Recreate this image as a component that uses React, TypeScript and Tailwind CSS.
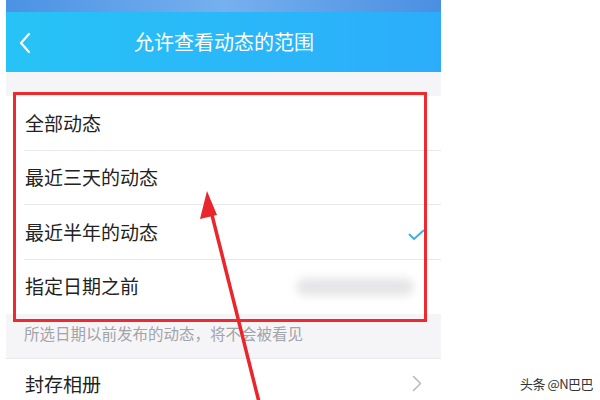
import React from "react";

const font = { fontFamily: '"Noto Sans CJK SC", "Noto Sans", sans-serif' };

function Row({ label, right, last }: { label: string; right?: React.ReactNode; last?: boolean }) {
  return (
    <div className="relative flex h-[54.5px] items-center bg-white pl-[19px] pr-[17px]">
      <span className="text-[19px] leading-none text-[#222] pb-[2px]">{label}</span>
      <div className="ml-auto flex items-center">{right}</div>
      {!last && <div className="absolute bottom-0 left-[18px] right-0 h-px bg-[#e9e9ec]" />}
    </div>
  );
}

export default function App() {
  return (
    <div className="relative h-[400px] w-[600px] overflow-hidden bg-white" style={font}>
      <div className="ml-[6px] flex w-[435px] flex-col">
        <div className="h-[12px] bg-gradient-to-r from-[#4a92e4] via-[#76b0ee] to-[#4a8fe2]" />
        <div className="relative flex h-[60px] items-center justify-center bg-gradient-to-r from-[#27c3f6] to-[#2cadfb]">
          <svg className="absolute left-[12px] top-[20px]" width="14" height="22" viewBox="0 0 14 22" fill="none">
            <path d="M11 2 L3 11 L11 20" stroke="white" strokeWidth="2.2" strokeLinecap="round" strokeLinejoin="round" />
          </svg>
          <span className="pl-[1px] text-[20px] text-white">允许查看动态的范围</span>
        </div>
        <div className="h-[24px] bg-[#f5f5f7]" />
        <Row label="全部动态" />
        <Row label="最近三天的动态" />
        <Row
          label="最近半年的动态"
          right={
            <svg width="17" height="12" viewBox="0 0 17 12" fill="none" className="mr-[-1px] mt-[6px]">
              <path d="M1.5 5.5 L6 10 L15.5 1.5" stroke="#3fb2dc" strokeWidth="2" strokeLinecap="round" strokeLinejoin="round" />
            </svg>
          }
        />
        <Row
          label="指定日期之前"
          last
          right={<div className="mr-[10px] h-[18px] w-[118px] rounded-full bg-[#e6e6e8] blur-[4px]" />}
        />
        <div className="flex h-[44px] items-center bg-[#f5f5f7] pb-[4px] pl-[18px] text-[15.5px] text-[#a3a3a8]">
          所选日期以前发布的动态，将不会被看见
        </div>
        <div className="h-px bg-[#e9e9ec]" />
        <div className="flex h-[54px] items-center bg-white pb-[6px] pl-[19px] pr-[19px]">
          <span className="text-[19px] leading-none text-[#222]">封存相册</span>
          <svg className="ml-auto" width="10" height="17" viewBox="0 0 10 17" fill="none">
            <path d="M1.5 1.5 L8.5 8.5 L1.5 15.5" stroke="#b8b8bc" strokeWidth="1.5" strokeLinecap="round" strokeLinejoin="round" />
          </svg>
        </div>
      </div>

      <div className="absolute left-[13px] top-[92px] h-[230px] w-[414px] border-[3px] border-[#ec2a2f]" />

      <svg className="absolute left-0 top-0" width="600" height="400" viewBox="0 0 600 400">
        <line x1="212" y1="215" x2="259" y2="402" stroke="#e8262c" strokeWidth="3.5" />
        <polygon points="207,191 200,219 217,215" fill="#e8262c" />
      </svg>

      <div className="absolute left-[520px] top-[374px] text-[13px] tracking-[-0.5px] text-[#333]">
        头条 @N巴巴
      </div>
    </div>
  );
}
